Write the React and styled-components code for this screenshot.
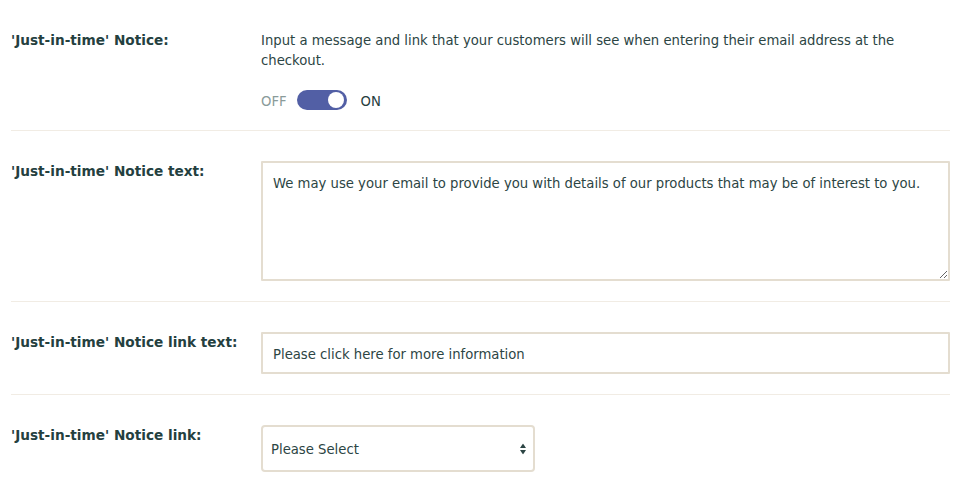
import React from 'react';
import styled, { createGlobalStyle } from 'styled-components';

const Global = createGlobalStyle`
  body {
    margin: 0;
    background: #ffffff;
    font-family: "DejaVu Sans Condensed", "DejaVu Sans", sans-serif;
    color: #27403f;
  }
`

const Page = styled.div`
  padding: 0 23px 0 11px;
`

const Row = styled.div`
  display: grid;
  grid-template-columns: 250px 1fr;
  padding: 30px 0 20px;
  border-bottom: 1px solid ${props => props.last ? 'transparent' : '#f1ece4'};
`

const Label = styled.div`
  font-family: "DejaVu Sans", sans-serif;
  font-weight: bold;
  font-size: 13.65px;
  line-height: 20px;
  color: #24403f;
`

const Field = styled.div`
  display: flex;
  flex-direction: column;
  align-items: flex-start;
`

const Help = styled.p`
  margin: 0;
  font-size: 14.7px;
  line-height: 20px;
  color: #2c4544;
`

const ToggleRow = styled.div`
  display: flex;
  align-items: center;
  gap: 10px;
  margin-top: 20px;
  font-size: 14.7px;
`

const State = styled.span`
  color: ${props => props.active ? '#27403f' : '#8a9b9a'};
  margin-left: ${props => props.active ? '4px' : '0'};
`

const Track = styled.span`
  position: relative;
  width: 50px;
  height: 20px;
  border-radius: 10px;
  background: #525fa5;
`

const Knob = styled.span`
  position: absolute;
  top: 2px;
  right: 3px;
  width: 16px;
  height: 16px;
  border-radius: 50%;
  background: #ffffff;
`

const TextArea = styled.textarea`
  box-sizing: border-box;
  width: 100%;
  height: 120px;
  margin: 0;
  padding: 10px 10px;
  border: 2px solid #e4ddd0;
  border-radius: 1px;
  font-family: inherit;
  font-size: 14.7px;
  line-height: 20px;
  color: #2c4544;
  resize: vertical;
  outline: none;
`

const Input = styled.input`
  box-sizing: border-box;
  width: 100%;
  height: 42px;
  margin: 0;
  padding: 0 10px;
  border: 2px solid #e4ddd0;
  border-radius: 1px;
  font-family: inherit;
  font-size: 14.7px;
  color: #2c4544;
  outline: none;
`

const SelectBox = styled.div`
  position: relative;
  box-sizing: border-box;
  width: 274px;
  height: 47px;
  border: 2px solid #e4ddd0;
  border-radius: 4px;
  display: flex;
  align-items: center;
  padding: 0 8px;
  font-size: 14.7px;
  color: #2c4544;
`

const Arrows = styled.svg`
  position: absolute;
  right: 7px;
  top: 50%;
  transform: translateY(-50%);
`

export default function App() {
  return (
    <>
      <Global />
      <Page>
        <Row>
          <Label>'Just-in-time' Notice:</Label>
          <Field>
            <Help>Input a message and link that your customers will see when entering their email address at the checkout.</Help>
            <ToggleRow>
              <State>OFF</State>
              <Track><Knob /></Track>
              <State active>ON</State>
            </ToggleRow>
          </Field>
        </Row>
        <Row>
          <Label>'Just-in-time' Notice text:</Label>
          <Field>
            <TextArea defaultValue="We may use your email to provide you with details of our products that may be of interest to you." />
          </Field>
        </Row>
        <Row>
          <Label>'Just-in-time' Notice link text:</Label>
          <Field>
            <Input defaultValue="Please click here for more information" />
          </Field>
        </Row>
        <Row last>
          <Label>'Just-in-time' Notice link:</Label>
          <Field>
            <SelectBox>
              Please Select
              <Arrows width="6" height="11" viewBox="0 0 6 11">
                <path d="M3 0 L6 4.5 L0 4.5 Z" fill="#2c4544" />
                <path d="M0 6.5 L6 6.5 L3 11 Z" fill="#2c4544" />
              </Arrows>
            </SelectBox>
          </Field>
        </Row>
      </Page>
    </>
  );
}
